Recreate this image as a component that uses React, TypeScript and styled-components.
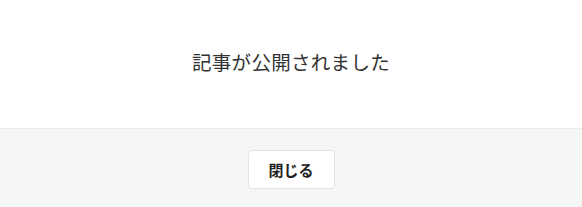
import React, {FC} from "react";
import styled, {createGlobalStyle} from "styled-components";

const GlobalStyle = createGlobalStyle`
  html, body {
    margin: 0;
    padding: 0;
    background: #ffffff;
  }
  body {
    font-family: "Noto Sans CJK JP", "Noto Sans", sans-serif;
  }
`

const App: FC = () => {
    return (
        <>
            <GlobalStyle/>
            <StyledDialog>
                <Body>
                    <Message>記事が公開されました</Message>
                </Body>
                <Footer>
                    <CloseButton type="button">閉じる</CloseButton>
                </Footer>
            </StyledDialog>
        </>
    )
}

const StyledDialog = styled.div`
  width: 582px;
  height: 207px;
  display: flex;
  flex-direction: column;
  background: #ffffff;
`
const Body = styled.div`
  height: 128px;
  box-sizing: border-box;
  padding-bottom: 4px;
  display: flex;
  align-items: center;
  justify-content: center;
`
const Message = styled.p`
  margin: 0;
  font-size: 19.5px;
  line-height: 28px;
  font-weight: 400;
  color: #333333;
  letter-spacing: 0.3px;
`
const Footer = styled.div`
  flex: 1;
  display: flex;
  align-items: center;
  justify-content: center;
  padding-top: 3px;
  background: #f5f6f6;
  border-top: 1px solid #eceeee;
`
const CloseButton = styled.button`
  width: 87px;
  height: 39px;
  border: 1px solid #e3e5e5;
  border-radius: 4px;
  background: #ffffff;
  font-family: "Noto Sans CJK JP", "Noto Sans", sans-serif;
  font-size: 15px;
  font-weight: 700;
  color: #222222;
  cursor: pointer;
`

export default App
